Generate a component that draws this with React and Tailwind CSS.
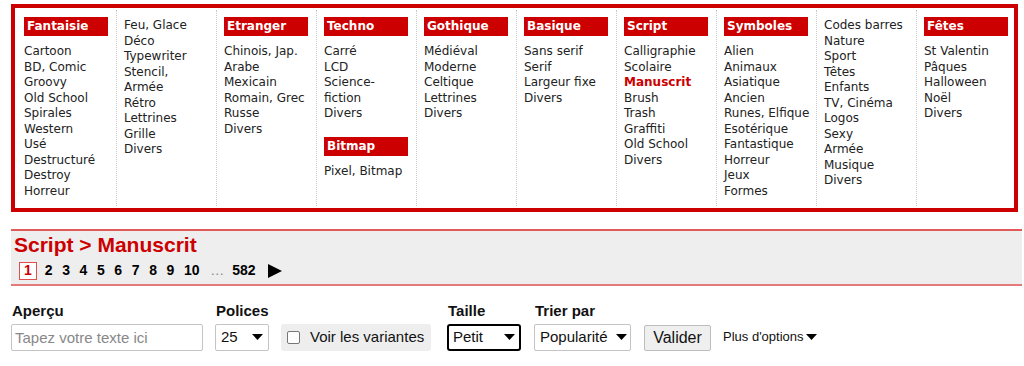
import React from 'react'

const menuFont = { fontFamily: '"DejaVu Sans", Verdana, sans-serif' }

// Colonnes du menu : un en-tête rouge optionnel puis la liste des liens.
const columns = [
  [{ title: 'Fantaisie', items: ['Cartoon', 'BD, Comic', 'Groovy', 'Old School', 'Spirales', 'Western', 'Usé', 'Destructuré', 'Destroy', 'Horreur'] }],
  [{ items: ['Feu, Glace', 'Déco', 'Typewriter', ['Stencil,', 'Armée'], 'Rétro', 'Lettrines', 'Grille', 'Divers'] }],
  [{ title: 'Etranger', items: ['Chinois, Jap.', 'Arabe', 'Mexicain', 'Romain, Grec', 'Russe', 'Divers'] }],
  [
    { title: 'Techno', items: ['Carré', 'LCD', ['Science-', 'fiction'], 'Divers'] },
    { title: 'Bitmap', items: ['Pixel, Bitmap'] },
  ],
  [{ title: 'Gothique', items: ['Médiéval', 'Moderne', 'Celtique', 'Lettrines', 'Divers'] }],
  [{ title: 'Basique', items: ['Sans serif', 'Serif', 'Largeur fixe', 'Divers'] }],
  [{ title: 'Script', items: ['Calligraphie', 'Scolaire', 'Manuscrit', 'Brush', 'Trash', 'Graffiti', 'Old School', 'Divers'] }],
  [{ title: 'Symboles', items: ['Alien', 'Animaux', 'Asiatique', 'Ancien', 'Runes, Elfique', 'Esotérique', 'Fantastique', 'Horreur', 'Jeux', 'Formes'] }],
  [{ items: ['Codes barres', 'Nature', 'Sport', 'Têtes', 'Enfants', 'TV, Cinéma', 'Logos', 'Sexy', 'Armée', 'Musique', 'Divers'] }],
  [{ title: 'Fêtes', items: ['St Valentin', 'Pâques', 'Halloween', 'Noël', 'Divers'] }],
]

function Caret({ className = '' }) {
  return (
    <svg width="11" height="6" viewBox="0 0 11 6" className={className} aria-hidden="true">
      <polygon points="0,0 11,0 5.5,6" fill="#000" />
    </svg>
  )
}

function MenuColumn({ groups, last }) {
  return (
    <div className={`my-[2px] w-[100px] shrink-0 pl-[7px] pt-[8px] ${last ? '' : 'border-r border-dotted border-[#c8c8c8]'}`}>
      {groups.map((g, gi) => (
        <div key={gi} className={gi > 0 ? 'mt-[16px]' : ''}>
          {g.title && (
            <div className="-mt-px mb-[8px] h-[19px] w-[84px] bg-[#cc0000] pl-[3px] text-[12px] font-bold leading-[19px] text-white">
              {g.title}
            </div>
          )}
          <ul className="text-[12px] leading-[15.5px] text-[#222]">
            {g.items.map((it, i) =>
              Array.isArray(it) ? (
                <li key={i}>
                  {it[0]}
                  <br />
                  {it[1]}
                </li>
              ) : (
                <li key={i} className={`whitespace-nowrap ${it === 'Manuscrit' ? 'font-bold text-[#cc0000]' : ''}`}>
                  {it}
                </li>
              )
            )}
          </ul>
        </div>
      ))}
    </div>
  )
}

export default function App() {
  const pages = ['2', '3', '4', '5', '6', '7', '8', '9', '10']

  return (
    <div className="h-[366px] w-[1024px] overflow-hidden bg-white" style={{ fontFamily: '"Liberation Sans", Arial, sans-serif' }}>
      {/* Menu des catégories */}
      <div className="ml-[11px] mt-[4px] h-[208px] w-[1007px] overflow-hidden border-4 border-[#cc0000]" style={menuFont}>
        <div className="flex h-full pl-[2px]">
          {columns.map((groups, i) => (
            <MenuColumn key={i} groups={groups} last={i === columns.length - 1} />
          ))}
        </div>
      </div>

      {/* Fil d'Ariane + pagination */}
      <div className="ml-[11px] mr-[2px] mt-[17px] h-[57px] border-y-2 border-t-[#e05a5a] border-b-[#e47a7a] bg-[#eeeeee] pl-[3px]">
        <h1 className="mt-[1px] text-[21px] font-bold leading-[25px] text-[#cc0000]">Script &gt; Manuscrit</h1>
        <div className="ml-[5px] mt-[3px] flex items-center text-[14px] font-bold text-black">
          <span className="flex h-[18px] w-[18px] items-center justify-center border border-[#e05050] bg-white text-[#cc0000]">1</span>
          <span className="w-[3px]" />
          {pages.map((p) => (
            <span key={p} className="px-[4.8px]">
              {p}
            </span>
          ))}
          <span className="ml-[2px] px-[4px] font-normal text-[#888]">…</span>
          <span className="px-[4px]">582</span>
          <svg width="14" height="14" viewBox="0 0 14 14" className="ml-[8px]" aria-hidden="true">
            <polygon points="0,0 14,7 0,14" fill="#000" />
          </svg>
        </div>
      </div>

      {/* Formulaire d'aperçu */}
      <div className="mt-[14px] flex items-end text-[15px] text-[#111]">
        <div className="ml-[11px] flex flex-col">
          <label className="mb-[1px] pl-px font-bold">Aperçu</label>
          <input
            placeholder="Tapez votre texte ici"
            className="h-[27px] w-[192px] rounded-[2px] border border-[#c4c4c4] px-[3px] text-[15px] placeholder:text-[#888] outline-none"
          />
        </div>
        <div className="ml-[12px] flex flex-col">
          <label className="mb-[1px] pl-px font-bold">Polices</label>
          <div className="flex h-[27px] w-[54px] items-center justify-between rounded-[2px] border border-[#c4c4c4] bg-white pl-[5px] pr-[5px]">
            <span>25</span>
            <Caret />
          </div>
        </div>
        <div className="ml-[12px] flex h-[27px] w-[150px] items-center rounded-[3px] bg-[#eeeeee] pl-[6px]">
          <span className="h-[13px] w-[13px] rounded-[2px] border border-[#767676] bg-white" />
          <span className="ml-[10px]">Voir les variantes</span>
        </div>
        <div className="ml-[16px] flex flex-col">
          <label className="mb-[1px] pl-px font-bold">Taille</label>
          <div className="flex h-[27px] w-[74px] items-center justify-between rounded-[3px] border-2 border-black bg-white pl-[4px] pr-[4px]">
            <span>Petit</span>
            <Caret />
          </div>
        </div>
        <div className="ml-[13px] flex flex-col">
          <label className="mb-[1px] pl-px font-bold">Trier par</label>
          <div className="flex h-[27px] w-[97px] items-center justify-between rounded-[2px] border border-[#c4c4c4] bg-white pl-[5px] pr-[3px]">
            <span>Popularité</span>
            <Caret />
          </div>
        </div>
        <button className="ml-[13px] h-[26px] w-[67px] rounded-[2px] border border-[#bdbdbd] bg-[#efefef] text-[16px] text-[#111]">Valider</button>
        <div className="mb-[4px] ml-[12px] flex items-center text-[13px] text-[#111]">
          <span>Plus d'options</span>
          <Caret className="ml-[2px]" />
        </div>
      </div>
    </div>
  )
}
